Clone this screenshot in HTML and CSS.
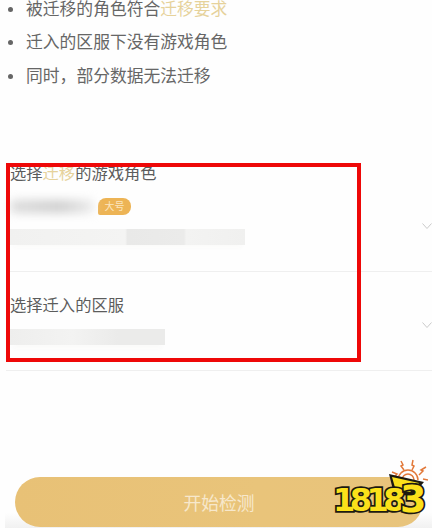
FILE: index.html
```html
<!DOCTYPE html>
<html lang="zh-CN">
<head>
  <meta charset="UTF-8">
  <meta name="viewport" content="width=device-width, initial-scale=1.0">
  <title>开始检测</title>
  <link rel="stylesheet" href="styles.css">
</head>
<body>
  <div class="page">
    <ul class="rules">
      <li><span>被迁移的角色符合<span class="gold">迁移要求</span></span></li>
      <li><span>迁入的区服下没有游戏角色</span></li>
      <li><span>同时<span class="comma">，</span>部分数据无法迁移</span></li>
    </ul>

    <div class="picker picker-role">
      <div class="picker-body">
        <div class="picker-title">选择<span class="gold">迁移</span>的游戏角色</div>
        <div class="role-line">
          <div class="blur-name"></div>
          <span class="badge">大号</span>
        </div>
        <div class="blur-bar blur-role"></div>
      </div>
      <svg class="chevron" width="10" height="7" viewBox="0 0 10 7"><path d="M.5.5L5 5.5 9.500.5" fill="none" stroke="#cacaca" stroke-width="1"/></svg>
    </div>

    <div class="picker picker-server">
      <div class="picker-body">
        <div class="picker-title">选择迁入的区服</div>
        <div class="blur-bar blur-server"></div>
      </div>
      <svg class="chevron" width="10" height="7" viewBox="0 0 10 7"><path d="M.5.5L5 5.500 9.500.5" fill="none" stroke="#cacaca" stroke-width="1"/></svg>
    </div>

    <div class="footer">
      <button class="start">开始检测</button>
    </div>
  </div>

  <div class="highlight"></div>

  <div class="logo">
    <svg class="logo-art" width="96" height="60" viewBox="0 0 96 60">
      <g fill="none" stroke="#e2793a" stroke-width="1.5">
        <path d="M66 22a10 10 0 0 1 20 0"/>
        <path d="M70 22a6 6 0 0 1 12 0"/>
        <path d="M60 14l5 2-2 2 4 2"/>
        <path d="M69 3l2 4-2 1 3 4"/>
        <path d="M81 2l-1 5 2 1-2 4"/>
        <path d="M94 9l-5 3 2 1-4 4"/>
        <path d="M96 22l-5-1"/>
      </g>
      <path d="M57 16L92 24 80 38 62 36z" fill="#1d1a10"/>
      <path d="M60 19L87 25 78 34 64 33z" fill="#fbe11a"/>
    </svg>
    <div class="logo-text">1818<span class="logo-three">3</span></div>
  </div>
</body>
</html>
```

FILE: styles.css
```css
html, body {
  margin: 0;
  padding: 0;
  background: #fff;
}
body {
  width: 439px;
  height: 528px;
  overflow: hidden;
  position: relative;
  font-family: "Liberation Sans", "Noto Sans CJK SC", sans-serif;
  color: #5c5c5c;
}
.page {
  width: 432px;
  height: 528px;
  overflow: hidden;
  background: #fefefe;
  display: flex;
  flex-direction: column;
}
.gold {
  color: #e6d29b;
}
.comma {
  font-family: "Noto Sans CJK TC", sans-serif;
}
.rules {
  list-style: none;
  margin: -7px 0 0;
  padding: 0 0 0 8px;
  font-size: 16.8px;
  line-height: 33px;
  color: #666;
}
.rules li {
  display: flex;
  align-items: center;
  gap: 13px;
}
.rules li::before {
  content: "";
  width: 5px;
  height: 5px;
  border-radius: 50%;
  background: #666;
}
.picker {
  display: flex;
  align-items: flex-start;
  justify-content: space-between;
  margin-left: 6px;
  border-bottom: 1px solid #efefef;
  padding-left: 4px;
}
.picker-role {
  margin-top: 61px;
  height: 117px;
}
.picker-server {
  height: 98px;
}
.picker-role .picker-body {
  padding-top: 9px;
}
.picker-server .picker-body {
  padding-top: 23px;
}
.picker-title {
  font-size: 16.3px;
  line-height: 20px;
}
.role-line {
  display: flex;
  align-items: center;
  gap: 4px;
  margin-top: 15px;
}
.blur-name {
  width: 84px;
  height: 13px;
  border-radius: 5px;
  background: linear-gradient(90deg, #dcdcdc, #cfcfcf 60%, #ececec);
  filter: blur(5px);
}
.badge {
  width: 33px;
  height: 17px;
  border-radius: 8px 8px 8px 2px;
  background: #edb455;
  color: #fbe6c0;
  font-size: 10px;
  line-height: 17px;
  text-align: center;
}
.blur-bar {
  height: 16px;
  margin-top: 14px;
}
.blur-role {
  width: 235px;
  background: linear-gradient(90deg, #f1f1f0, #f4f4f3 49%, #e9e9e8 50%, #ebebea 74%, #f3f3f2 75%, #f0f0ef);
  box-shadow: 0 6px 5px -3px #fbfbfa;
}
.blur-server {
  width: 155px;
  background: linear-gradient(90deg, #eeeeed, #f3f3f2 40%, #ebebea 70%, #ebebea);
  box-shadow: 0 7px 5px -3px #fbfbfa;
}
.chevron {
  flex: none;
}
.picker-role .chevron {
  margin-top: 69px;
}
.picker-server .chevron {
  margin-top: 50px;
}
.footer {
  margin: auto 0 0 5px;
  padding: 0 9px 1px 10px;
  background: linear-gradient(180deg, #fefefe 70%, #f1f1f1);
}
.start {
  display: block;
  width: 100%;
  height: 50px;
  border: none;
  border-radius: 25px;
  background: linear-gradient(90deg, #e8c176, #e9c47a 60%, #e8c47c);
  color: #f7e8cc;
  font-family: inherit;
  font-size: 17.8px;
}
.highlight {
  position: absolute;
  left: 6px;
  top: 163px;
  width: 347px;
  height: 191px;
  border: 4px solid #ee0808;
}
.logo {
  position: absolute;
  left: 332px;
  top: 458px;
  width: 96px;
  height: 60px;
}
.logo-art {
  position: absolute;
  left: 0;
  top: 0;
}
.logo-text {
  position: absolute;
  left: 1px;
  top: 25px;
  font-family: "DejaVu Sans", sans-serif;
  font-weight: 700;
  font-size: 32px;
  line-height: 32px;
  letter-spacing: -5.5px;
  color: #fbe11a;
  -webkit-text-stroke: 3.5px #1d1a10;
  paint-order: stroke fill;
  white-space: nowrap;
}
.logo-three {
  font-size: 38px;
  vertical-align: -1px;
}
```
